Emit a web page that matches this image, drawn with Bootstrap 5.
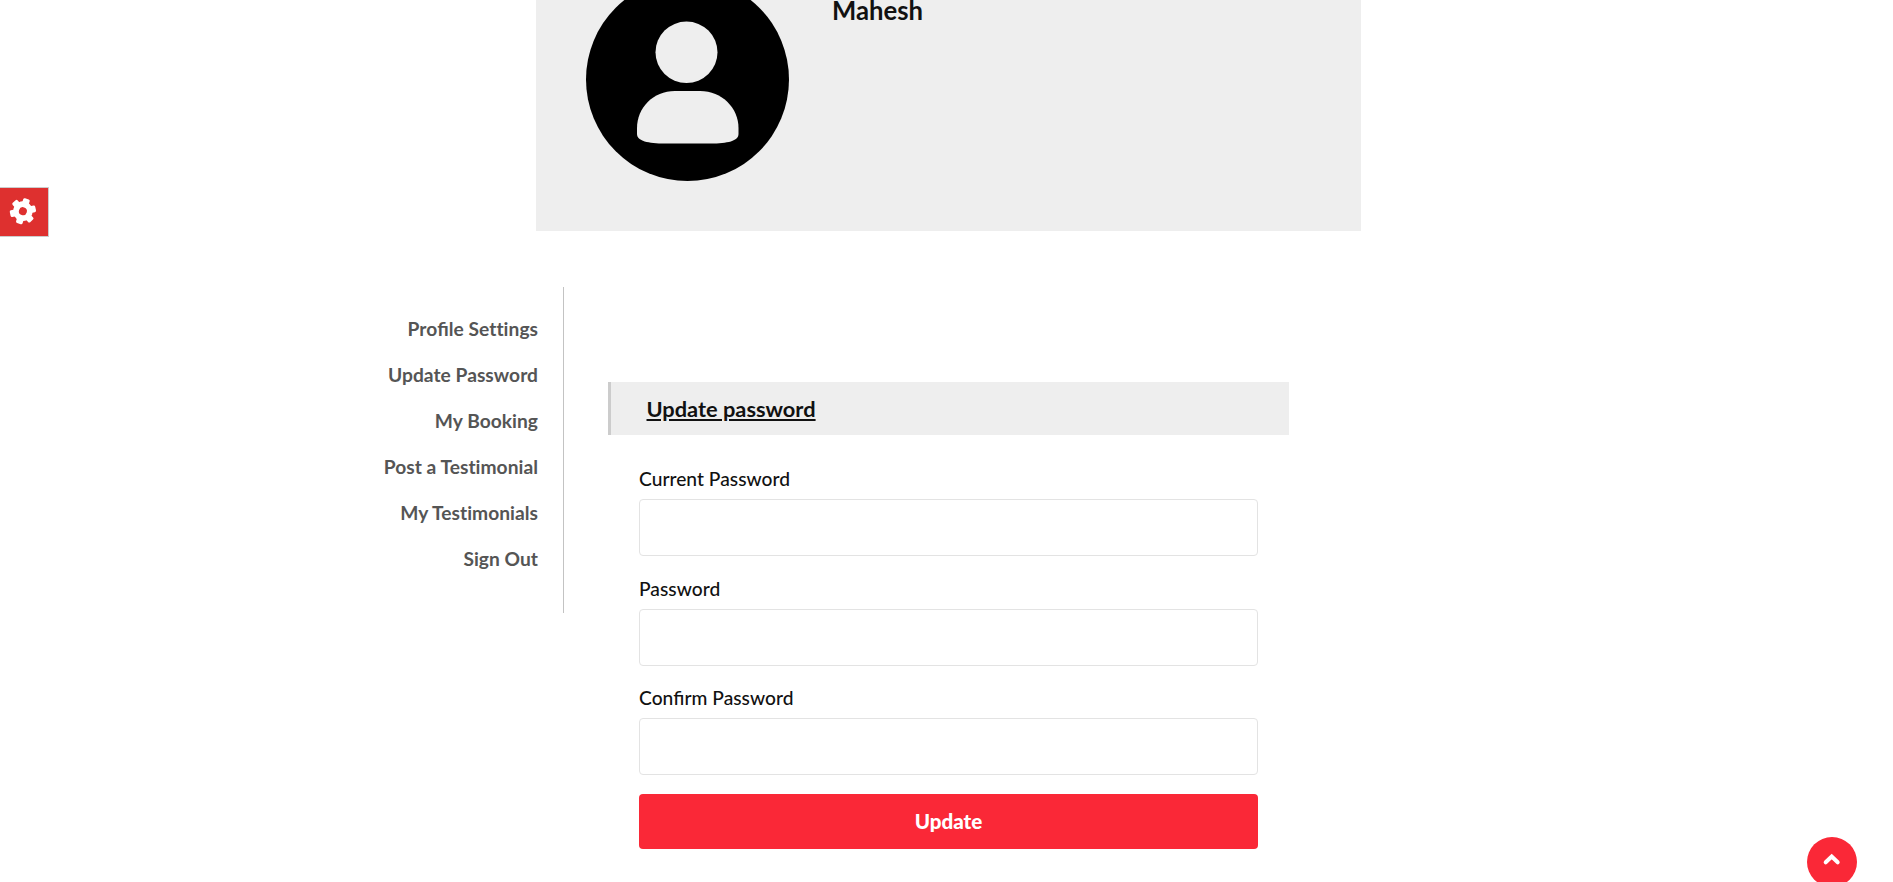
<!DOCTYPE html>
<html lang="en">
<head>
<meta charset="utf-8">
<meta name="viewport" content="width=device-width, initial-scale=1">
<title>Update Password</title>
<link href="https://cdn.jsdelivr.net/npm/bootstrap@5.3.0/dist/css/bootstrap.min.css" rel="stylesheet">
<style>
  body { font-family: Lato, "Liberation Sans", sans-serif; color: #111; background: #fff; height: 100vh; overflow: hidden; font-size: 19px; line-height: 30px; }
  .profile-panel { width: 825px; height: 231px; margin-left: 536px; background: #eee; padding-left: 50px; }
  .avatar { width: 203px; height: 203px; margin-top: -22px; }
  .profile-name { font-size: 25.7px; line-height: 30px; font-weight: 700; margin: -5px 0 0 43px; }
  .account { margin-top: 56px; }
  .side-menu { width: 564px; height: 326px; padding: 19px 25px 0 0; border-right: 1px solid #c3c3c3; }
  .side-menu li { height: 46px; line-height: 46px; }
  .side-menu a { color: #555; font-weight: 700; font-size: 19.2px; letter-spacing: .03px; }
  .joined { letter-spacing: 0; }
  .form-column { width: 681px; margin: 95px 0 0 44px; }
  .form-title { height: 53px; line-height: 53px; font-size: 21.8px; font-weight: 700; background: #eee; border-left: 3px solid #ccc; padding-left: 35.5px; }
  .password-form { padding: 29.3px 31px 0; }
  .password-form .form-label { font-weight: 500; color: #111; height: 30px; margin-bottom: 5px; font-size: 19.2px; letter-spacing: .03px; }
  .password-form .form-control { height: 57.2px; border: 1px solid #e3e3e3; border-radius: 4px; }
  .field { margin-bottom: 17.2px; }
  .btn-update { height: 55px; margin-top: 1.5px; background: #fa2837; color: #fff; border: 0; border-radius: 4px; font-size: 20.6px; font-weight: 900; }
  .settings-tab { top: 187px; left: 0; width: 49px; height: 50px; background: #de302f; border: 1px solid #ccc; border-left: 0; }
  .to-top { left: 1807px; top: 837px; width: 50px; height: 50px; background: #fa2837; }
</style>
</head>
<body>
<section class="profile-panel d-flex align-items-start">
  <svg class="avatar flex-shrink-0" viewBox="0 0 203 203" aria-hidden="true">
    <circle cx="101.5" cy="101.5" r="101.5"/>
    <ellipse cx="100.5" cy="74.300" rx="31" ry="30.700" fill="#eee"/>
    <path fill="#eee" d="M89 113h25c22 0 38.500 17 38.500 37v6c0 7-11 9.500-28 9.500H79c-17 0-28-2.500-28-9.500v-6c0-20 16-37 38-37z"/>
  </svg>
  <h5 class="profile-name">Mahesh</h5>
</section>
<main class="account d-flex align-items-start">
  <nav class="side-menu text-end flex-shrink-0">
    <ul class="list-unstyled mb-0">
      <li><a class="text-decoration-none" href="#">Pro<span class="joined">fi</span>le Settings</a></li>
      <li><a class="text-decoration-none" href="#">Update Password</a></li>
      <li><a class="text-decoration-none" href="#">My Booking</a></li>
      <li><a class="text-decoration-none" href="#">Post a Testimonial</a></li>
      <li><a class="text-decoration-none" href="#">My Testimonials</a></li>
      <li><a class="text-decoration-none" href="#">Sign Out</a></li>
    </ul>
  </nav>
  <section class="form-column">
    <h6 class="form-title text-decoration-underline mb-0">Update password</h6>
    <form class="password-form">
      <div class="field"><label class="form-label d-block" for="current">Current Password</label><input class="form-control" id="current" type="password"></div>
      <div class="field"><label class="form-label d-block" for="new">Password</label><input class="form-control" id="new" type="password"></div>
      <div class="field"><label class="form-label d-block" for="confirm">Con<span class="joined">fi</span>rm Password</label><input class="form-control" id="confirm" type="password"></div>
      <button class="btn btn-update w-100" type="button">Update</button>
    </form>
  </section>
</main>
<a class="settings-tab position-fixed" href="#" aria-label="Settings">
  <svg class="d-block" width="48" height="48" viewBox="0 0 48 48" aria-hidden="true">
    <g transform="translate(22.900 23.200) rotate(18)" fill="#fff">
      <rect x="-3.400" y="-13" width="6.800" height="26" rx="1.500"/>
      <rect x="-3.400" y="-13" width="6.800" height="26" rx="1.500" transform="rotate(60)"/>
      <rect x="-3.400" y="-13" width="6.800" height="26" rx="1.500" transform="rotate(120)"/>
      <circle r="9.800"/><circle r="4" fill="#de302f"/>
    </g>
  </svg>
</a>
<a class="to-top position-fixed rounded-circle" href="#" aria-label="Back to top">
  <svg class="d-block" width="50" height="50" viewBox="0 0 50 50" aria-hidden="true"><path d="M18.700 25.300 24.700 19.500l6 5.800" fill="none" stroke="#fff" stroke-width="4" stroke-linecap="round"/></svg>
</a>
<script src="https://cdn.jsdelivr.net/npm/bootstrap@5.3.0/dist/js/bootstrap.bundle.min.js"></script>
</body>
</html>
